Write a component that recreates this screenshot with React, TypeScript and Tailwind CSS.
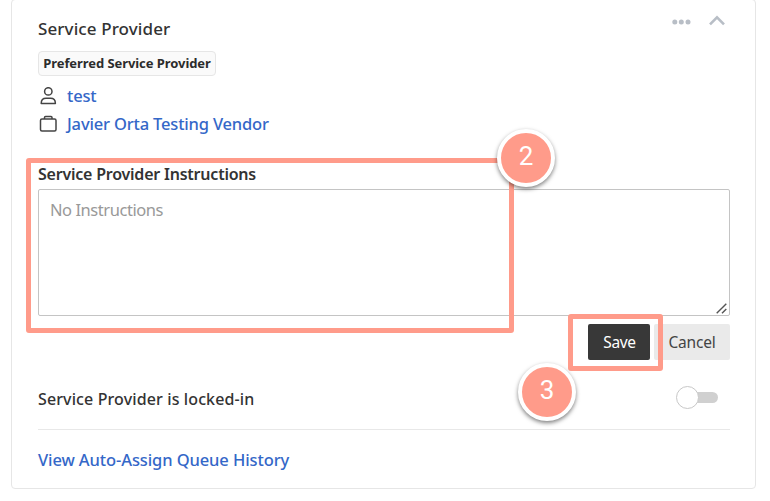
import type { ReactNode } from 'react';

function ContactRow({ icon, children }: { icon: ReactNode; children: string }) {
  return (
    <div className="flex h-7 items-center">
      <span className="flex w-[29px] shrink-0">{icon}</span>
      <a className="whitespace-nowrap text-[16.5px] font-medium tracking-[-0.17px] text-[#3467c8]">{children}</a>
    </div>
  );
}

function StepMarker({ step, className }: { step: number; className: string }) {
  return (
    <div
      className={`absolute flex size-[58px] items-center justify-center rounded-full border-4 border-white bg-[#ff9b8a] pb-[5px] font-[Roboto,sans-serif] text-[26px] leading-none text-white shadow-[0_2px_4px_rgba(0,0,0,0.5)] ${className}`}
    >
      {step}
    </div>
  );
}

export default function App() {
  return (
    <div className="relative h-[501px] w-[770px] overflow-hidden bg-white font-['Noto_Sans',sans-serif] text-[#333]">
      <section className="-mt-px ml-[11px] flex h-[490px] w-[745px] flex-col rounded-[4px] border border-[#e6e6e6] px-[26px]">
        <header className="flex h-[51px] items-start justify-between">
          <h2 className="mt-[17px] whitespace-nowrap text-[17px] font-medium leading-6 tracking-[0.1px]">Service Provider</h2>
          <div className="mr-[4px] mt-[15px] flex items-center gap-[18px] text-[#b8bec6]">
            <svg className="mt-[2px]" width="19" height="6" viewBox="0 0 19 6" fill="currentColor">
              <circle cx="2.8" cy="3" r="2.5" />
              <circle cx="9.3" cy="3" r="2.5" />
              <circle cx="16" cy="3" r="2.5" />
            </svg>
            <svg width="16" height="12" viewBox="0 0 16 12" fill="none" stroke="currentColor" strokeWidth="2.6">
              <path d="M1 9.3 8 2.3l7 7" />
            </svg>
          </div>
        </header>

        <div className="flex h-[25px] w-[178px] items-center justify-center whitespace-nowrap rounded-[4px] border border-[#e6e6e6] bg-[#fafafa] text-[13px] font-bold tracking-[-0.07px] text-[#2c2c2c]">
          Preferred Service Provider
        </div>

        <div className="mt-[6px] flex flex-col">
          <ContactRow
            icon={
              <svg className="ml-[2px]" width="17" height="18" viewBox="0 0 17 18" fill="none" stroke="#444" strokeWidth="1.5">
                <circle cx="8.3" cy="4.4" r="3.7" />
                <path d="M1.2 16.4c0-3.3 2.1-5.2 4.9-5.2h4.400c2.800 0 4.900 1.900 4.900 5.200z" strokeLinejoin="round" />
              </svg>
            }
          >
            test
          </ContactRow>
          <ContactRow
            icon={
              <svg className="mb-[2px] ml-[1px]" width="19" height="17" viewBox="0 0 19 17" fill="none" stroke="#444" strokeWidth="1.5">
                <rect x="1.5" y="4" width="15.5" height="12" rx="1.5" />
                <path d="M5.500 4V2.500q0-1 1-1h5.500q1 0 1 1V4" />
              </svg>
            }
          >
            Javier Orta Testing Vendor
          </ContactRow>
        </div>

        <label className="mb-[3px] mt-[24px] flex h-6 items-center whitespace-nowrap text-[16px] font-semibold tracking-[-0.22px]">
          Service Provider Instructions
        </label>
        <div className="relative flex h-[127px] w-[692px] shrink-0 rounded-[2px] border border-[#c4c4c4] px-[11px] pt-[8px] text-[16.5px] leading-6 text-[#999]">
          <span className="tracking-[-0.45px]">No Instructions</span>
          <svg className="absolute bottom-[1px] right-[2px]" width="11" height="11" viewBox="0 0 11 11" stroke="#555" strokeWidth="1.4">
            <path d="M.7 10.3 10.3.7M6 10.3 10.3 6" />
          </svg>
        </div>
        <div className="mt-2 flex h-9 w-[692px] justify-end gap-1 text-[15.5px]">
          <button className="h-9 w-[62px] rounded-[2px] bg-[#383838] pl-px pt-px tracking-[-0.3px] text-white">Save</button>
          <button className="h-9 w-[76px] rounded-[2px] bg-[#eaeaea] pt-px tracking-[-0.2px] text-[#444]">Cancel</button>
        </div>

        <div className="flex h-[70px] w-[692px] items-center justify-between border-b border-[#e8e8e8] pt-[8px]">
          <span className="whitespace-nowrap text-[16px] font-medium tracking-[0.12px]">Service Provider is locked-in</span>
          <div className="mb-[2px] mr-[12px] flex h-6 w-[42px] items-center">
            <span className="z-10 size-[23px] shrink-0 rounded-full border border-[#c8c8c8] bg-white" />
            <span className="-ml-[3px] h-[11px] w-[22px] rounded-r-full bg-[#d0d0d0]" />
          </div>
        </div>
        <a className="mt-[18px] whitespace-nowrap text-[16.5px] font-medium leading-6 tracking-[-0.1px] text-[#3467c8]">
          View Auto-Assign Queue History
        </a>
      </section>

      <div className="absolute left-[26px] top-[158px] h-[175px] w-[488px] rounded-[3px] border-[5px] border-[#ff9b8a]" />
      <div className="absolute left-[568px] top-[314px] h-[57px] w-[95px] rounded-[3px] border-[5px] border-[#ff9b8a]" />
      <StepMarker step={2} className="left-[497px] top-[129px]" />
      <StepMarker step={3} className="left-[518px] top-[363px]" />
    </div>
  );
}
